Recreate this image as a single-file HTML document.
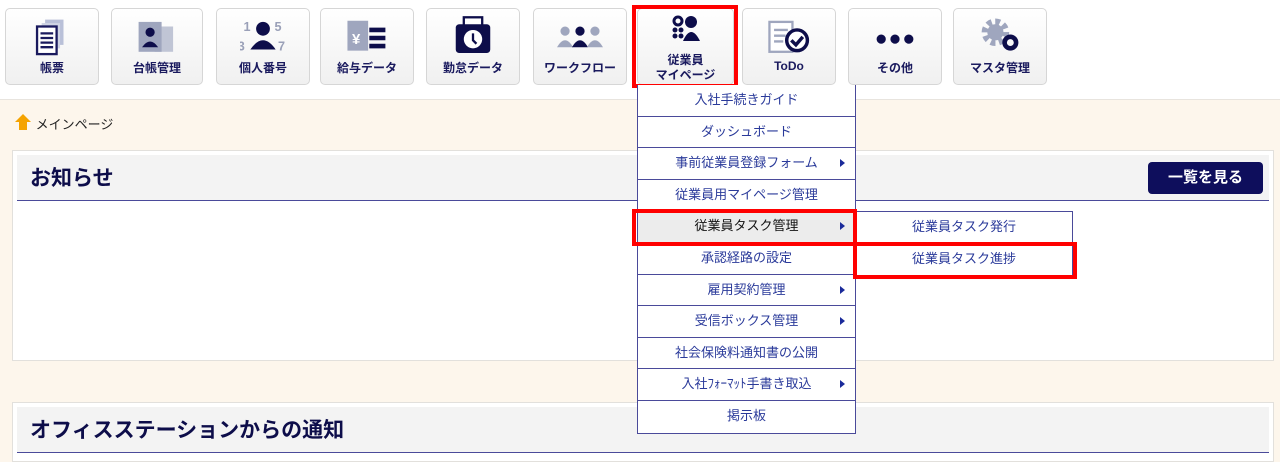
<!DOCTYPE html>
<html><head><meta charset="utf-8"><style>
*{box-sizing:border-box;margin:0;padding:0}
body{width:1280px;height:446px;overflow:hidden;background:#fdf6ec;font-family:"Liberation Sans","Noto Sans CJK JP",sans-serif;position:relative}
.top{position:absolute;left:0;top:0;width:1280px;height:100px;background:#fff;border-bottom:1px solid #e8e4de}
.btn{position:absolute;top:8px;width:94px;height:77px;border:1px solid #d6d6d6;border-radius:5px;background:linear-gradient(#fff,#f0f0f0);text-align:center;font-size:12px;font-weight:bold;color:#1a1a5e}
.btn svg{position:absolute;left:50%;margin-left:-23px;top:6px}
.btn .lb{position:absolute;left:0;right:0;top:50px}
.red{position:absolute;border:4px solid #f00}
.bc{position:absolute;left:14px;top:113px;font-size:13px;color:#222}
.bc svg{vertical-align:-2px}
.panel{position:absolute;left:12px;width:1262px;background:#fff;border:1px solid #e2e0dc}
.ph{position:absolute;left:4px;right:4px;top:4px;height:46px;background:#f3f3f3;border-bottom:1px solid #4a4a9a;font-size:21px;font-weight:bold;color:#0d0d4a;padding:7px 0 0 13px}
.more{position:absolute;right:6px;top:7px;width:115px;height:32px;background:#0e0e5c;border-radius:4px;color:#fff;font-size:15px;font-weight:bold;text-align:center;line-height:32px}
.menu{position:absolute;left:637px;top:85px;width:219px;background:#fff;border:1px solid #4a4a9a;border-top:none}
.mi{height:31.6px;border-bottom:1px solid #4a4a9a;text-align:center;font-size:13px;color:#2a3a9a;line-height:30px;position:relative}
.mi:last-child{border-bottom:none}
.mi.ar:after{content:"";position:absolute;right:10px;top:11px;border-left:5px solid #1a2a9a;border-top:4px solid transparent;border-bottom:4px solid transparent}
.sub{position:absolute;left:855px;top:211px;width:218px;background:#fff;border:1px solid #4a4a9a}
</style></head><body>
<div class="top"></div>
<div class="btn" style="left:5px"><svg width="46" height="46" viewBox="0 0 40 40"><rect x="14" y="4" width="16" height="22" fill="#b9c0d8"/><rect x="11" y="7" width="16" height="22" fill="#cfd4e4"/><rect x="7" y="10" width="17" height="24" fill="#fff" stroke="#1a1a5e" stroke-width="2"/><path d="M10 16h11M10 20h11M10 24h11M10 28h11" stroke="#1a1a5e" stroke-width="2"/></svg><div class="lb">帳票</div></div>
<div class="btn" style="left:111px;width:92px"><svg width="46" height="46" viewBox="0 0 40 40"><rect x="18" y="10" width="16" height="22" fill="#c0c5d5"/><rect x="4" y="6" width="20" height="26" fill="#9fa6be"/><circle cx="14" cy="15" r="4" fill="#0d0d4a"/><path d="M7 28q7-10 14 0z" fill="#0d0d4a"/></svg><div class="lb">台帳管理</div></div>
<div class="btn" style="left:216px"><svg width="46" height="46" viewBox="0 0 40 40"><text x="3" y="14" font-size="11" fill="#9aa0b8" font-weight="bold">1</text><text x="30" y="14" font-size="11" fill="#9aa0b8" font-weight="bold">5</text><text x="-2" y="31" font-size="11" fill="#9aa0b8" font-weight="bold">3</text><text x="33" y="31" font-size="11" fill="#9aa0b8" font-weight="bold">7</text><circle cx="20" cy="12" r="6" fill="#0d0d4a"/><path d="M9 30q11-16 22 0z" fill="#0d0d4a"/></svg><div class="lb">個人番号</div></div>
<div class="btn" style="left:320px"><svg width="46" height="46" viewBox="0 0 40 40"><rect x="3" y="5" width="18" height="26" fill="#9fa6be"/><text x="7" y="25" font-size="13" fill="#fff" font-weight="bold">¥</text><path d="M22 13h14M22 20h14M22 27h14" stroke="#0d0d4a" stroke-width="4"/></svg><div class="lb">給与データ</div></div>
<div class="btn" style="left:426px"><svg width="46" height="46" viewBox="0 0 40 40"><rect x="12" y="2" width="16" height="8" fill="#fff" stroke="#0d0d4a" stroke-width="2"/><rect x="5" y="8" width="30" height="25" rx="3" fill="#0d0d4a"/><circle cx="20" cy="21" r="8" fill="#fff"/><path d="M20 16v6l3 3" stroke="#0d0d4a" stroke-width="2" fill="none"/></svg><div class="lb">勤怠データ</div></div>
<div class="btn" style="left:533px"><svg width="46" height="46" viewBox="0 0 40 40"><circle cx="7" cy="14" r="4" fill="#9fa6be"/><path d="M0 28q7-12 14 0z" fill="#9fa6be"/><circle cx="20" cy="14" r="4" fill="#0d0d4a"/><path d="M13 28q7-12 14 0z" fill="#0d0d4a"/><circle cx="33" cy="14" r="4" fill="#9fa6be"/><path d="M26 28q7-12 14 0z" fill="#9fa6be"/></svg><div class="lb">ワークフロー</div></div>
<div class="btn" style="left:637px;width:97px"><svg width="40" height="40" viewBox="0 0 40 40" style="top:4px;margin-left:-20px"><circle cx="12" cy="8" r="4" fill="none" stroke="#0d0d4a" stroke-width="3"/><g fill="#0d0d4a"><circle cx="9" cy="17" r="2.5"/><circle cx="15" cy="17" r="2.5"/><circle cx="9" cy="23" r="2.5"/><circle cx="15" cy="23" r="2.5"/><circle cx="25" cy="9" r="6"/><path d="M17 28q8-18 17 0z"/></g></svg><div class="lb" style="top:44px;line-height:15px">従業員<br>マイページ</div></div>
<div class="red" style="left:632px;top:5px;width:106px;height:83px"></div>
<div class="btn" style="left:742px"><svg width="46" height="46" viewBox="0 0 40 40"><rect x="3" y="6" width="20" height="26" fill="#fff" stroke="#9fa6be" stroke-width="2"/><path d="M7 13h12M7 18h10M7 23h8" stroke="#9fa6be" stroke-width="2"/><circle cx="27" cy="22" r="9" fill="#fff" stroke="#0d0d4a" stroke-width="3"/><path d="M22 22l4 4 6-7" stroke="#0d0d4a" stroke-width="3" fill="none"/></svg><div class="lb">ToDo</div></div>
<div class="btn" style="left:848px"><svg width="46" height="46" viewBox="0 0 40 40"><circle cx="8" cy="21" r="4" fill="#0d0d4a"/><circle cx="20" cy="21" r="4" fill="#0d0d4a"/><circle cx="32" cy="21" r="4" fill="#0d0d4a"/></svg><div class="lb">その他</div></div>
<div class="btn" style="left:953px"><svg width="46" height="46" viewBox="0 0 40 40"><circle cx="16" cy="15" r="9" fill="none" stroke="#9fa6be" stroke-width="6" stroke-dasharray="4 3"/><circle cx="16" cy="15" r="7" fill="#9fa6be"/><circle cx="29" cy="24" r="5" fill="none" stroke="#0d0d4a" stroke-width="4"/></svg><div class="lb">マスタ管理</div></div>
<div class="bc"><svg width="18" height="18"><path d="M9 1L1 9h4v8h8V9h4z" fill="#f5a300"/></svg> メインページ</div>
<div class="panel" style="top:150px;height:211px"><div class="ph">お知らせ<div class="more">一覧を見る</div></div></div>
<div class="panel" style="top:402px;height:60px"><div class="ph">オフィスステーションからの通知</div></div>
<div class="menu">
<div class="mi">入社手続きガイド</div>
<div class="mi">ダッシュボード</div>
<div class="mi ar">事前従業員登録フォーム</div>
<div class="mi">従業員用マイページ管理</div>
<div class="mi ar" style="background:#ececec;color:#111">従業員タスク管理</div>
<div class="mi">承認経路の設定</div>
<div class="mi ar">雇用契約管理</div>
<div class="mi ar">受信ボックス管理</div>
<div class="mi">社会保険料通知書の公開</div>
<div class="mi ar">入社ﾌｫｰﾏｯﾄ手書き取込</div>
<div class="mi">掲示板</div>
</div>
<div class="sub"><div class="mi">従業員タスク発行</div><div class="mi">従業員タスク進捗</div></div>
<div class="red" style="left:632px;top:209px;width:225px;height:37px"></div>
<div class="red" style="left:853px;top:242px;width:224px;height:37px"></div>
</body></html>
